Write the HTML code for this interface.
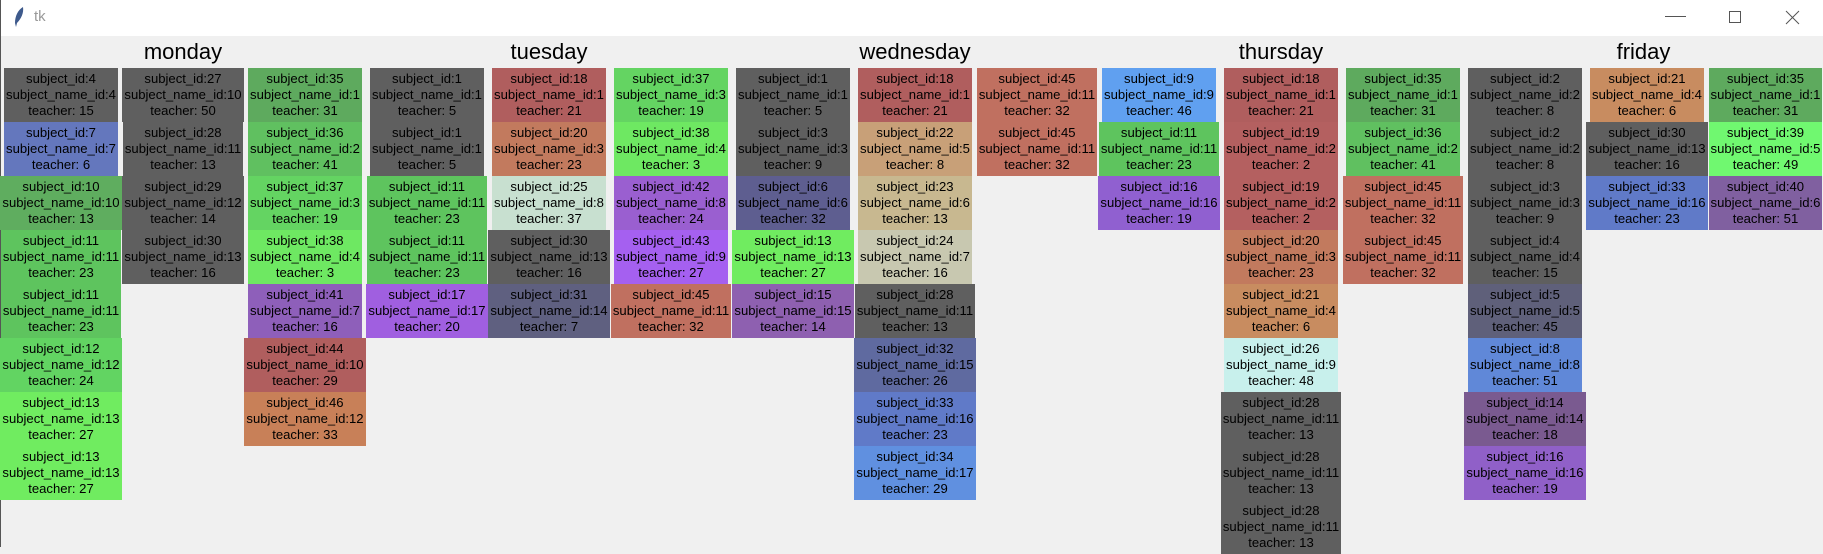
<!DOCTYPE html>
<html><head><meta charset="utf-8"><style>
*{margin:0;padding:0;box-sizing:border-box}
body{width:1823px;height:547px;overflow:hidden;background:#f0f0f0;font-family:"Liberation Sans",Arial,sans-serif;position:relative}
#tb{position:absolute;left:0;top:0;width:1823px;height:36px;background:#fff}
#tb .t{position:absolute;left:34px;top:8px;font-size:15px;color:#999}
#lb{position:absolute;left:0;top:0;width:1px;height:547px;background:#555}
.hd{position:absolute;top:36px;height:32px;line-height:32px;font-size:22px;color:#000;text-align:center}
#g{position:absolute;left:0px;top:68px;display:grid;grid-template-columns:repeat(14,122px) 115px;grid-auto-rows:54px}
.c{justify-self:center;padding:3px 2px 0;font-size:13.1px;line-height:16px;text-align:center;white-space:nowrap;color:#000;height:54px}
</style></head><body>
<div id="tb"><svg style="position:absolute;left:13px;top:6px" width="12" height="22" viewBox="0 0 12 22"><path d="M10 1 C5 4 2 10 2 17 L3 21 L4 17 C8 13 11 7 10 1Z" fill="#3e5a8c"/></svg><span class="t">tk</span>
<svg style="position:absolute;left:1664px;top:10px" width="140" height="16" viewBox="0 0 140 16"><line x1="1" y1="6.5" x2="22" y2="6.5" stroke="#555"/><rect x="65.5" y="1.5" width="11" height="11" fill="none" stroke="#555"/><path d="M122 1 L135 14 M135 1 L122 14" stroke="#555"/></svg></div>
<div id="lb"></div>
<div class="hd" style="left:0px;width:366px">monday</div>
<div class="hd" style="left:366px;width:366px">tuesday</div>
<div class="hd" style="left:732px;width:366px">wednesday</div>
<div class="hd" style="left:1098px;width:366px">thursday</div>
<div class="hd" style="left:1464px;width:359px">friday</div>
<div id="g">
<div class="c" style="grid-column:1;grid-row:1;background:#5f5f5f">subject_id:4<br>subject_name_id:4<br>teacher: 15</div>
<div class="c" style="grid-column:1;grid-row:2;background:#6477bd">subject_id:7<br>subject_name_id:7<br>teacher: 6</div>
<div class="c" style="grid-column:1;grid-row:3;background:#5fad5f">subject_id:10<br>subject_name_id:10<br>teacher: 13</div>
<div class="c" style="grid-column:1;grid-row:4;background:#5ec45e">subject_id:11<br>subject_name_id:11<br>teacher: 23</div>
<div class="c" style="grid-column:1;grid-row:5;background:#5ec45e">subject_id:11<br>subject_name_id:11<br>teacher: 23</div>
<div class="c" style="grid-column:1;grid-row:6;background:#62d462">subject_id:12<br>subject_name_id:12<br>teacher: 24</div>
<div class="c" style="grid-column:1;grid-row:7;background:#70ec60">subject_id:13<br>subject_name_id:13<br>teacher: 27</div>
<div class="c" style="grid-column:1;grid-row:8;background:#70ec60">subject_id:13<br>subject_name_id:13<br>teacher: 27</div>
<div class="c" style="grid-column:2;grid-row:1;background:#5f5f5f">subject_id:27<br>subject_name_id:10<br>teacher: 50</div>
<div class="c" style="grid-column:2;grid-row:2;background:#5f5f5f">subject_id:28<br>subject_name_id:11<br>teacher: 13</div>
<div class="c" style="grid-column:2;grid-row:3;background:#5f5f5f">subject_id:29<br>subject_name_id:12<br>teacher: 14</div>
<div class="c" style="grid-column:2;grid-row:4;background:#5f5f5f">subject_id:30<br>subject_name_id:13<br>teacher: 16</div>
<div class="c" style="grid-column:3;grid-row:1;background:#5eaa5e">subject_id:35<br>subject_name_id:1<br>teacher: 31</div>
<div class="c" style="grid-column:3;grid-row:2;background:#60c060">subject_id:36<br>subject_name_id:2<br>teacher: 41</div>
<div class="c" style="grid-column:3;grid-row:3;background:#64d462">subject_id:37<br>subject_name_id:3<br>teacher: 19</div>
<div class="c" style="grid-column:3;grid-row:4;background:#6ee862">subject_id:38<br>subject_name_id:4<br>teacher: 3</div>
<div class="c" style="grid-column:3;grid-row:5;background:#8e5fba">subject_id:41<br>subject_name_id:7<br>teacher: 16</div>
<div class="c" style="grid-column:3;grid-row:6;background:#b05e5e">subject_id:44<br>subject_name_id:10<br>teacher: 29</div>
<div class="c" style="grid-column:3;grid-row:7;background:#c88058">subject_id:46<br>subject_name_id:12<br>teacher: 33</div>
<div class="c" style="grid-column:4;grid-row:1;background:#5f5f5f">subject_id:1<br>subject_name_id:1<br>teacher: 5</div>
<div class="c" style="grid-column:4;grid-row:2;background:#5f5f5f">subject_id:1<br>subject_name_id:1<br>teacher: 5</div>
<div class="c" style="grid-column:4;grid-row:3;background:#5ec45e">subject_id:11<br>subject_name_id:11<br>teacher: 23</div>
<div class="c" style="grid-column:4;grid-row:4;background:#5ec45e">subject_id:11<br>subject_name_id:11<br>teacher: 23</div>
<div class="c" style="grid-column:4;grid-row:5;background:#a05fe0">subject_id:17<br>subject_name_id:17<br>teacher: 20</div>
<div class="c" style="grid-column:5;grid-row:1;background:#b05e5e">subject_id:18<br>subject_name_id:1<br>teacher: 21</div>
<div class="c" style="grid-column:5;grid-row:2;background:#c27a5e">subject_id:20<br>subject_name_id:3<br>teacher: 23</div>
<div class="c" style="grid-column:5;grid-row:3;background:#c8e0d0">subject_id:25<br>subject_name_id:8<br>teacher: 37</div>
<div class="c" style="grid-column:5;grid-row:4;background:#5f5f5f">subject_id:30<br>subject_name_id:13<br>teacher: 16</div>
<div class="c" style="grid-column:5;grid-row:5;background:#5f6080">subject_id:31<br>subject_name_id:14<br>teacher: 7</div>
<div class="c" style="grid-column:6;grid-row:1;background:#64d462">subject_id:37<br>subject_name_id:3<br>teacher: 19</div>
<div class="c" style="grid-column:6;grid-row:2;background:#6ee862">subject_id:38<br>subject_name_id:4<br>teacher: 3</div>
<div class="c" style="grid-column:6;grid-row:3;background:#9a5fd0">subject_id:42<br>subject_name_id:8<br>teacher: 24</div>
<div class="c" style="grid-column:6;grid-row:4;background:#a560f0">subject_id:43<br>subject_name_id:9<br>teacher: 27</div>
<div class="c" style="grid-column:6;grid-row:5;background:#c07060">subject_id:45<br>subject_name_id:11<br>teacher: 32</div>
<div class="c" style="grid-column:7;grid-row:1;background:#5f5f5f">subject_id:1<br>subject_name_id:1<br>teacher: 5</div>
<div class="c" style="grid-column:7;grid-row:2;background:#5f5f5f">subject_id:3<br>subject_name_id:3<br>teacher: 9</div>
<div class="c" style="grid-column:7;grid-row:3;background:#5e5e90">subject_id:6<br>subject_name_id:6<br>teacher: 32</div>
<div class="c" style="grid-column:7;grid-row:4;background:#70ec60">subject_id:13<br>subject_name_id:13<br>teacher: 27</div>
<div class="c" style="grid-column:7;grid-row:5;background:#8e60b0">subject_id:15<br>subject_name_id:15<br>teacher: 14</div>
<div class="c" style="grid-column:8;grid-row:1;background:#b05e5e">subject_id:18<br>subject_name_id:1<br>teacher: 21</div>
<div class="c" style="grid-column:8;grid-row:2;background:#c8a078">subject_id:22<br>subject_name_id:5<br>teacher: 8</div>
<div class="c" style="grid-column:8;grid-row:3;background:#c8b890">subject_id:23<br>subject_name_id:6<br>teacher: 13</div>
<div class="c" style="grid-column:8;grid-row:4;background:#c8c8b0">subject_id:24<br>subject_name_id:7<br>teacher: 16</div>
<div class="c" style="grid-column:8;grid-row:5;background:#5f5f5f">subject_id:28<br>subject_name_id:11<br>teacher: 13</div>
<div class="c" style="grid-column:8;grid-row:6;background:#5f6aa0">subject_id:32<br>subject_name_id:15<br>teacher: 26</div>
<div class="c" style="grid-column:8;grid-row:7;background:#607ac8">subject_id:33<br>subject_name_id:16<br>teacher: 23</div>
<div class="c" style="grid-column:8;grid-row:8;background:#6090e0">subject_id:34<br>subject_name_id:17<br>teacher: 29</div>
<div class="c" style="grid-column:9;grid-row:1;background:#c07060">subject_id:45<br>subject_name_id:11<br>teacher: 32</div>
<div class="c" style="grid-column:9;grid-row:2;background:#c07060">subject_id:45<br>subject_name_id:11<br>teacher: 32</div>
<div class="c" style="grid-column:10;grid-row:1;background:#60a0f0">subject_id:9<br>subject_name_id:9<br>teacher: 46</div>
<div class="c" style="grid-column:10;grid-row:2;background:#5ec45e">subject_id:11<br>subject_name_id:11<br>teacher: 23</div>
<div class="c" style="grid-column:10;grid-row:3;background:#9060d0">subject_id:16<br>subject_name_id:16<br>teacher: 19</div>
<div class="c" style="grid-column:11;grid-row:1;background:#b05e5e">subject_id:18<br>subject_name_id:1<br>teacher: 21</div>
<div class="c" style="grid-column:11;grid-row:2;background:#b46060">subject_id:19<br>subject_name_id:2<br>teacher: 2</div>
<div class="c" style="grid-column:11;grid-row:3;background:#b46060">subject_id:19<br>subject_name_id:2<br>teacher: 2</div>
<div class="c" style="grid-column:11;grid-row:4;background:#c27a5e">subject_id:20<br>subject_name_id:3<br>teacher: 23</div>
<div class="c" style="grid-column:11;grid-row:5;background:#c88c60">subject_id:21<br>subject_name_id:4<br>teacher: 6</div>
<div class="c" style="grid-column:11;grid-row:6;background:#c8f0ec">subject_id:26<br>subject_name_id:9<br>teacher: 48</div>
<div class="c" style="grid-column:11;grid-row:7;background:#5f5f5f">subject_id:28<br>subject_name_id:11<br>teacher: 13</div>
<div class="c" style="grid-column:11;grid-row:8;background:#5f5f5f">subject_id:28<br>subject_name_id:11<br>teacher: 13</div>
<div class="c" style="grid-column:11;grid-row:9;background:#5f5f5f">subject_id:28<br>subject_name_id:11<br>teacher: 13</div>
<div class="c" style="grid-column:12;grid-row:1;background:#5eaa5e">subject_id:35<br>subject_name_id:1<br>teacher: 31</div>
<div class="c" style="grid-column:12;grid-row:2;background:#60c060">subject_id:36<br>subject_name_id:2<br>teacher: 41</div>
<div class="c" style="grid-column:12;grid-row:3;background:#c07060">subject_id:45<br>subject_name_id:11<br>teacher: 32</div>
<div class="c" style="grid-column:12;grid-row:4;background:#c07060">subject_id:45<br>subject_name_id:11<br>teacher: 32</div>
<div class="c" style="grid-column:13;grid-row:1;background:#5f5f5f">subject_id:2<br>subject_name_id:2<br>teacher: 8</div>
<div class="c" style="grid-column:13;grid-row:2;background:#5f5f5f">subject_id:2<br>subject_name_id:2<br>teacher: 8</div>
<div class="c" style="grid-column:13;grid-row:3;background:#5f5f5f">subject_id:3<br>subject_name_id:3<br>teacher: 9</div>
<div class="c" style="grid-column:13;grid-row:4;background:#5f5f5f">subject_id:4<br>subject_name_id:4<br>teacher: 15</div>
<div class="c" style="grid-column:13;grid-row:5;background:#5f607a">subject_id:5<br>subject_name_id:5<br>teacher: 45</div>
<div class="c" style="grid-column:13;grid-row:6;background:#6088d8">subject_id:8<br>subject_name_id:8<br>teacher: 51</div>
<div class="c" style="grid-column:13;grid-row:7;background:#7a5a90">subject_id:14<br>subject_name_id:14<br>teacher: 18</div>
<div class="c" style="grid-column:13;grid-row:8;background:#9060c8">subject_id:16<br>subject_name_id:16<br>teacher: 19</div>
<div class="c" style="grid-column:14;grid-row:1;background:#c88c60">subject_id:21<br>subject_name_id:4<br>teacher: 6</div>
<div class="c" style="grid-column:14;grid-row:2;background:#5f5f5f">subject_id:30<br>subject_name_id:13<br>teacher: 16</div>
<div class="c" style="grid-column:14;grid-row:3;background:#607ac8">subject_id:33<br>subject_name_id:16<br>teacher: 23</div>
<div class="c" style="grid-column:15;grid-row:1;background:#5eaa5e">subject_id:35<br>subject_name_id:1<br>teacher: 31</div>
<div class="c" style="grid-column:15;grid-row:2;background:#70f870">subject_id:39<br>subject_name_id:5<br>teacher: 49</div>
<div class="c" style="grid-column:15;grid-row:3;background:#8060a0">subject_id:40<br>subject_name_id:6<br>teacher: 51</div>
</div>
</body></html>
